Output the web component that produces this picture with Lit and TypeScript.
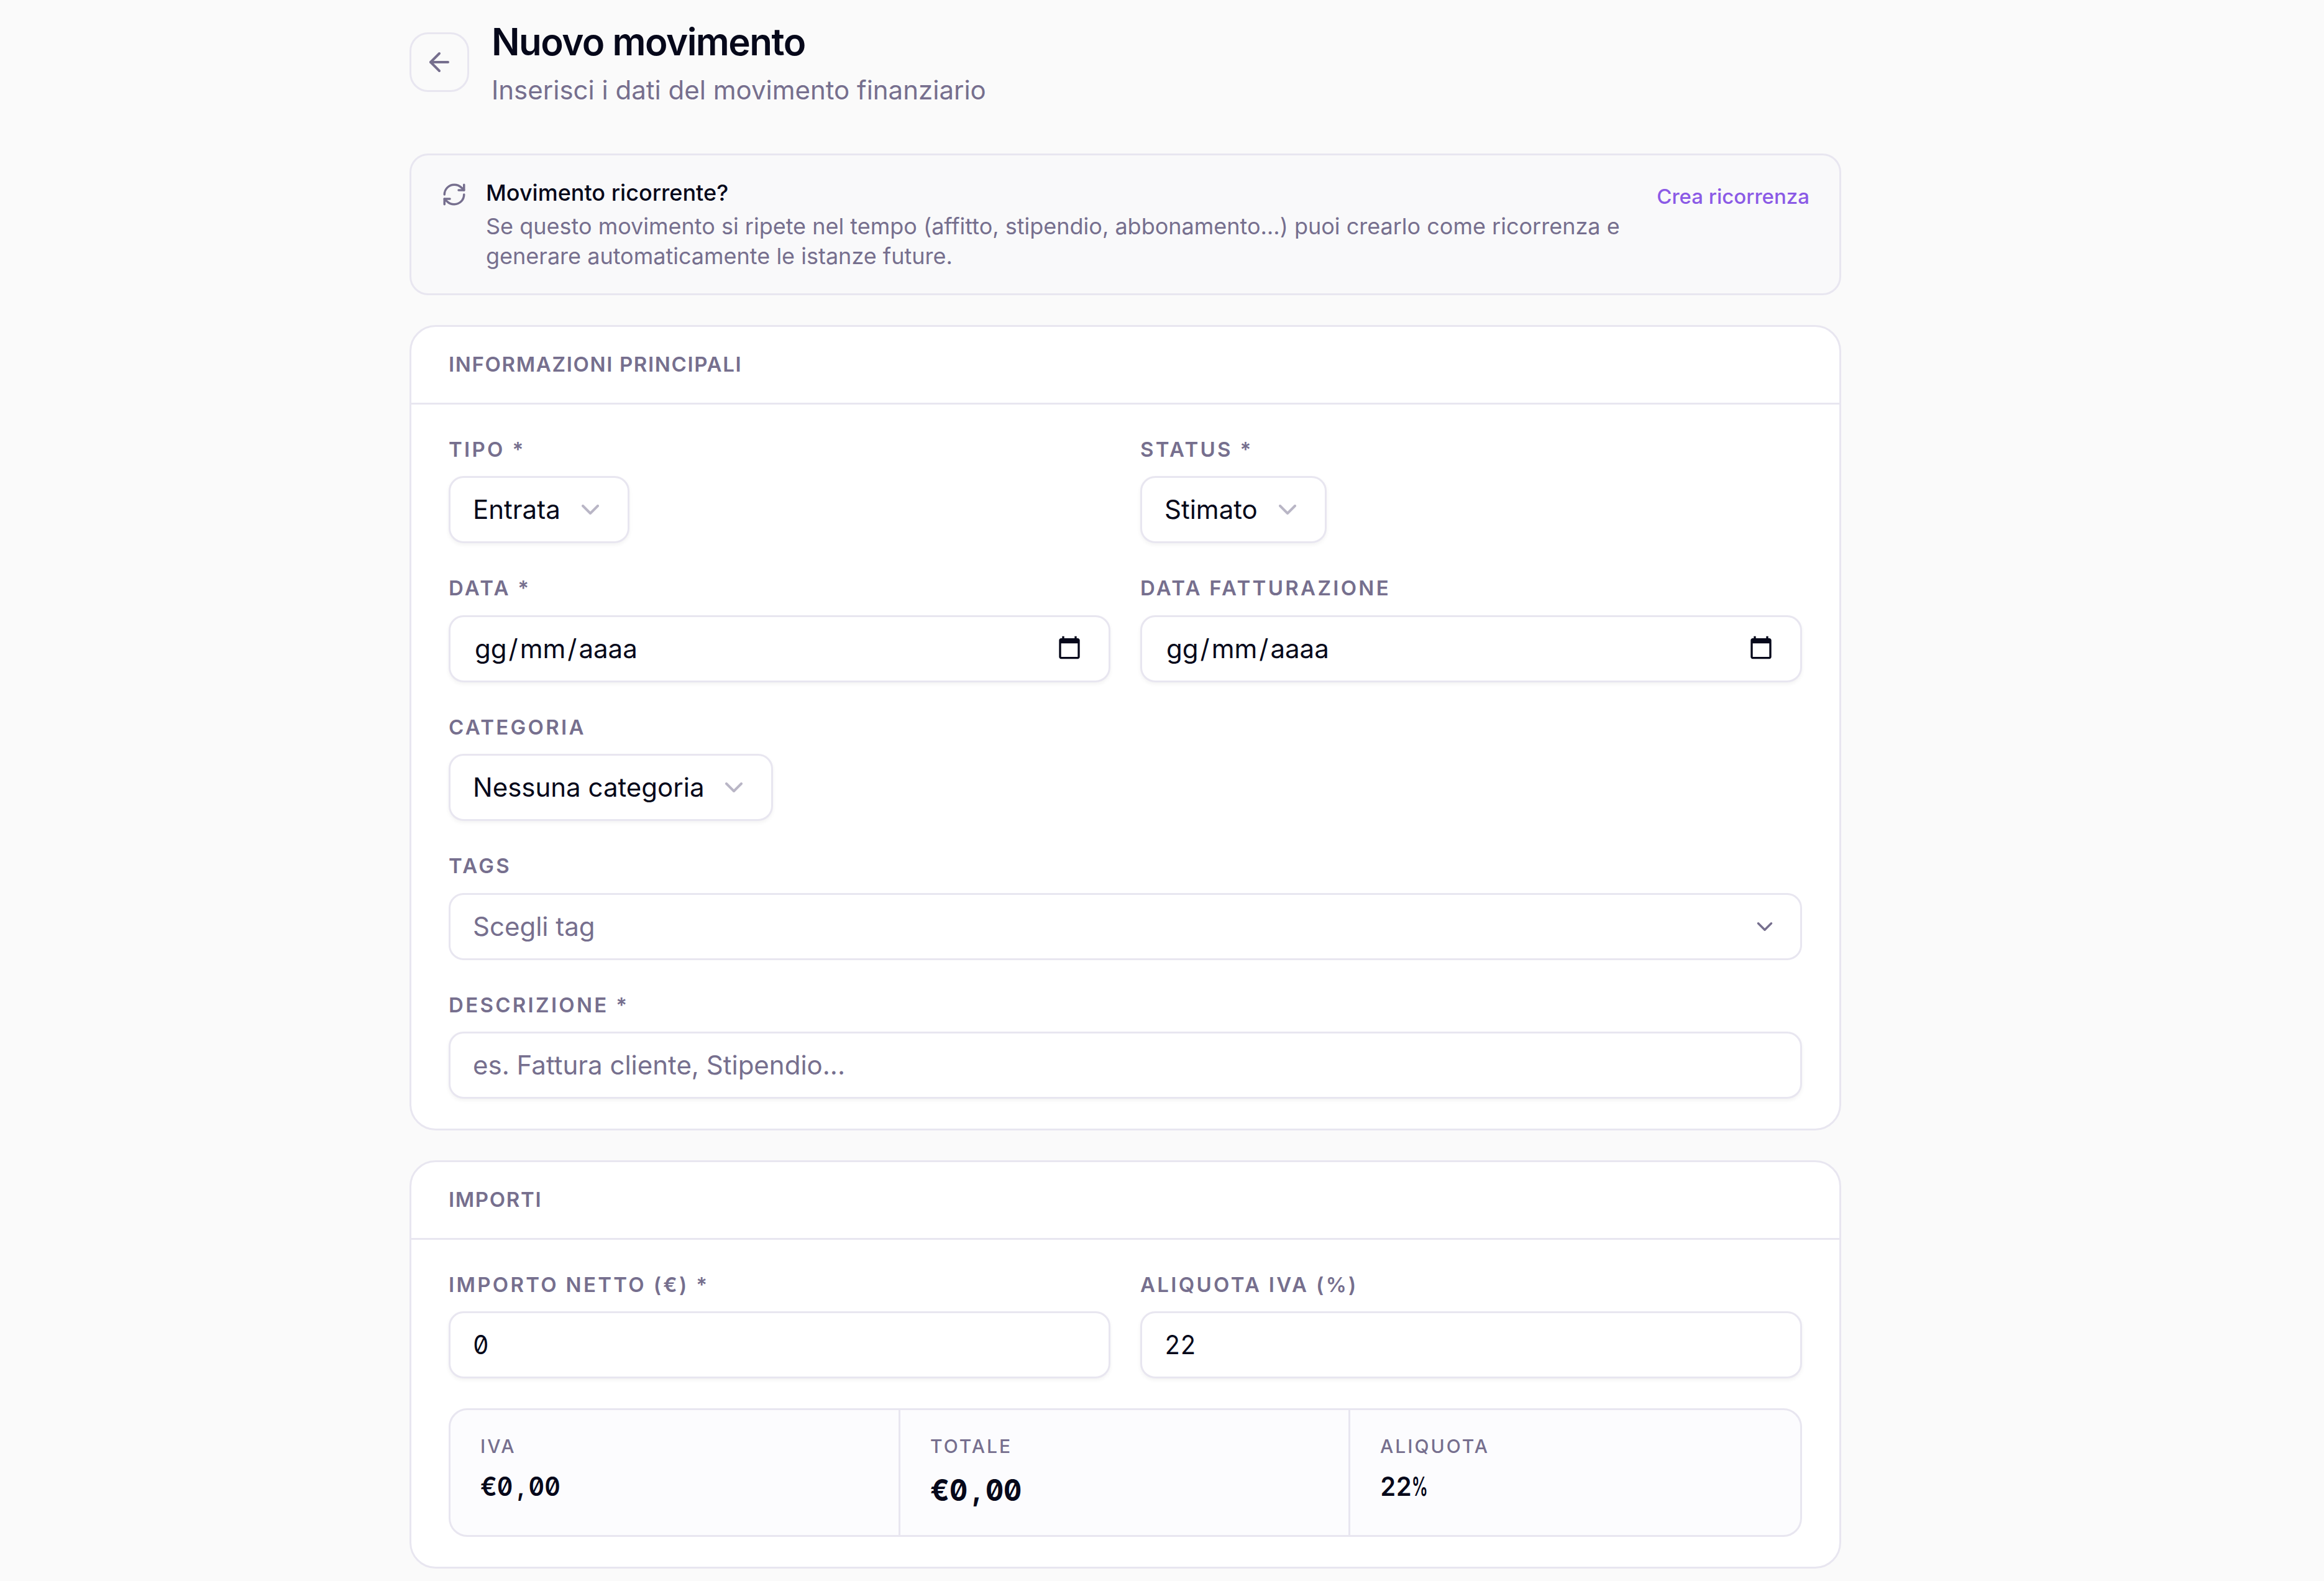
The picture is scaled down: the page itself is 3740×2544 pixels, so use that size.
import { LitElement, html, css, svg, nothing } from 'lit';
import { customElement, property } from 'lit/decorators.js';

const ICONS: Record<string, unknown> = {
  'arrow-left': svg`<path d="m12 19-7-7 7-7"/><path d="M19 12H5"/>`,
  'refresh': svg`<path d="M3 12a9 9 0 0 1 9-9 9.75 9.75 0 0 1 6.74 2.74L21 8"/><path d="M21 3v5h-5"/><path d="M21 12a9 9 0 0 1-9 9 9.75 9.75 0 0 1-6.74-2.74L3 16"/><path d="M8 16H3v5"/>`,
  'chevron': svg`<path d="m6 9 6 6 6-6"/>`,
};

@customElement('ui-icon')
export class UiIcon extends LitElement {
  @property() name = '';

  static styles = css`
    :host {
      display: block;
      flex: none;
      width: 48px;
      height: 48px;
    }

    svg {
      display: block;
      width: 100%;
      height: 100%;
      fill: none;
      stroke: currentColor;
      stroke-width: 2;
      stroke-linecap: round;
      stroke-linejoin: round;
    }
  `;

  render() {
    return html`<svg viewBox="0 0 24 24">${ICONS[this.name]}</svg>`;
  }
}

@customElement('form-card')
export class FormCard extends LitElement {
  @property() heading = '';

  static styles = css`
    :host {
      display: block;
      background: #fff;
      border: 3px solid #e8e6f0;
      border-radius: 42px;
      overflow: hidden;
    }

    h2 {
      margin: 0;
      padding: 36px 60px;
      border-bottom: 3px solid #e8e6f0;
      font-size: 33px;
      font-weight: 600;
      line-height: 49.5px;
      letter-spacing: 0.05em;
      text-transform: uppercase;
      color: #766f8e;
    }

    .body {
      display: grid;
      grid-template-columns: 1fr 1fr;
      gap: 48px;
      padding: 48px 60px;
    }
  `;

  render() {
    return html`
      <h2>${this.heading}</h2>
      <div class="body"><slot></slot></div>
    `;
  }
}

@customElement('form-field')
export class FormField extends LitElement {
  @property() label = '';
  @property() kind = 'text';
  @property() value = '';
  @property() placeholder = '';

  static styles = css`
    :host {
      display: flex;
      flex-direction: column;
      align-items: flex-start;
      gap: 18px;
      min-width: 0;
    }

    :host([wide]) {
      grid-column: 1 / -1;
    }

    .label {
      font-size: 33px;
      font-weight: 600;
      line-height: 49.5px;
      letter-spacing: 0.1em;
      text-transform: uppercase;
      color: #766f8e;
      white-space: nowrap;
    }

    .control {
      box-sizing: border-box;
      display: flex;
      align-items: center;
      justify-content: space-between;
      gap: 24px;
      width: 100%;
      height: 108px;
      padding: 0 36px;
      background: #fff;
      border: 3px solid #e8e6f0;
      border-radius: 24px;
      box-shadow: 0 3px 6px rgba(0, 0, 0, 0.05);
      font-size: 42px;
      line-height: 60px;
      white-space: nowrap;
    }

    .select {
      width: auto;
    }

    .select ui-icon {
      color: #766f8e;
      opacity: 0.5;
    }

    .picker {
      box-shadow: none;
      color: #766f8e;
    }

    .picker ui-icon {
      width: 42px;
      height: 42px;
    }

    .placeholder {
      color: #766f8e;
    }

    .number {
      font-feature-settings: 'tnum', 'zero';
      letter-spacing: -0.01em;
      transform: scaleX(0.94);
      transform-origin: left;
    }

    /* date segments keep a little air around the slashes */
    .date {
      display: flex;
    }

    .date span {
      padding: 0 3px;
    }

    .calendar {
      width: 40px;
      height: 40px;
      margin: 0 7px 3px 0;
      fill: currentColor;
    }
  `;

  private renderControl() {
    switch (this.kind) {
      case 'select':
        return html`<div class="control select">
          <span>${this.value}</span><ui-icon name="chevron"></ui-icon>
        </div>`;
      case 'picker':
        return html`<div class="control picker">
          <span>${this.placeholder}</span><ui-icon name="chevron"></ui-icon>
        </div>`;
      case 'date':
        return html`<div class="control">
          <div class="date"><span>gg</span>/<span>mm</span>/<span>aaaa</span></div>
          <svg class="calendar" viewBox="0 0 24 24">
            <path d="M20 3h-1V1h-2v2H7V1H5v2H4c-1.1 0-2 .9-2 2v16c0 1.1.9 2 2 2h16c1.1 0 2-.9 2-2V5c0-1.1-.9-2-2-2zm0 18H4V8h16v13z"/>
          </svg>
        </div>`;
      case 'number':
        return html`<div class="control"><span class="number">${this.value}</span></div>`;
      default:
        return html`<div class="control"><span class="placeholder">${this.placeholder}</span></div>`;
    }
  }

  render() {
    return html`<div class="label">${this.label}</div>${this.renderControl()}`;
  }
}

interface Total {
  label: string;
  value: string;
  decimals?: string;
  unit?: string;
  strong?: boolean;
}

@customElement('app-root')
export class AppRoot extends LitElement {
  private totals: Total[] = [
    { label: 'IVA', value: '€0', decimals: '00' },
    { label: 'Totale', value: '€0', decimals: '00', strong: true },
    { label: 'Aliquota', value: '22', unit: '%' },
  ];

  static styles = css`
    :host {
      display: block;
      box-sizing: border-box;
      height: 2544px;
      overflow: hidden;
      padding: 25px 0 0 659px;
      background: #fafafa;
      color: #06081a;
      font-family: Inter, 'Liberation Sans', sans-serif;
    }

    .page {
      display: flex;
      flex-direction: column;
      gap: 48px;
      width: 2304px;
    }

    header {
      display: flex;
      align-items: center;
      gap: 36px;
      margin-bottom: 24px;
    }

    .back {
      box-sizing: border-box;
      display: grid;
      place-items: center;
      width: 96px;
      height: 96px;
      border: 3px solid #e8e6f0;
      border-radius: 30px;
      color: #766f8e;
    }

    h1 {
      margin: 0 0 6px;
      font-size: 60px;
      font-weight: 600;
      line-height: 84px;
      letter-spacing: -0.025em;
    }

    .subtitle {
      font-size: 42px;
      line-height: 60px;
      color: #766f8e;
    }

    .notice {
      display: flex;
      align-items: flex-start;
      gap: 30px;
      padding: 36px 48px;
      background: #f9f9fa;
      border: 3px solid #e8e6f0;
      border-radius: 30px;
      font-size: 36px;
      line-height: 48px;
    }

    .notice ui-icon {
      width: 42px;
      height: 42px;
      margin-top: 6px;
      color: #766f8e;
    }

    .notice-text {
      flex: 1;
    }

    .notice-title {
      margin-bottom: 6px;
      font-weight: 500;
    }

    .notice-body {
      color: #766f8e;
    }

    .notice-link {
      margin-top: 6px;
      font-size: 33px;
      font-weight: 500;
      color: #8b5ae6;
      white-space: nowrap;
    }

    .totals {
      grid-column: 1 / -1;
      display: grid;
      grid-template-columns: repeat(3, 1fr);
      background: #fcfcfe;
      border: 3px solid #e8e6f0;
      border-radius: 30px;
    }

    .total {
      padding: 36px 48px;
      border-right: 3px solid #e8e6f0;
    }

    .total:last-child {
      border-right: 0;
    }

    .total-label {
      margin-bottom: 12px;
      font-size: 30px;
      font-weight: 500;
      line-height: 45px;
      letter-spacing: 0.1em;
      text-transform: uppercase;
      color: #766f8e;
    }

    .total-value {
      font-size: 42px;
      font-weight: 600;
      line-height: 60px;
      font-feature-settings: 'tnum', 'zero';
      transform: scaleX(0.94);
      transform-origin: left;
    }

    .total-value.strong {
      font-size: 48px;
      font-weight: 700;
      line-height: 72px;
    }

    /* the comma takes a full digit cell */
    .comma {
      display: inline-block;
      width: 0.64em;
      text-align: center;
    }

    .unit {
      display: inline-block;
      transform: scaleX(0.66);
      transform-origin: left;
    }
  `;

  private renderValue(t: Total) {
    return html`<div class="total-value ${t.strong ? 'strong' : ''}">${t.value}${t.decimals
      ? html`<span class="comma">,</span>${t.decimals}`
      : nothing}${t.unit ? html`<span class="unit">${t.unit}</span>` : nothing}</div>`;
  }

  render() {
    return html`
      <div class="page">
        <header>
          <div class="back"><ui-icon name="arrow-left"></ui-icon></div>
          <div>
            <h1>Nuovo movimento</h1>
            <div class="subtitle">Inserisci i dati del movimento finanziario</div>
          </div>
        </header>

        <section class="notice">
          <ui-icon name="refresh"></ui-icon>
          <div class="notice-text">
            <div class="notice-title">Movimento ricorrente?</div>
            <div class="notice-body">
              Se questo movimento si ripete nel tempo (affitto, stipendio, abbonamento…) puoi crearlo come ricorrenza e
              generare automaticamente le istanze future.
            </div>
          </div>
          <div class="notice-link">Crea ricorrenza</div>
        </section>

        <form-card heading="Informazioni principali">
          <form-field label="Tipo *" kind="select" value="Entrata"></form-field>
          <form-field label="Status *" kind="select" value="Stimato"></form-field>
          <form-field label="Data *" kind="date"></form-field>
          <form-field label="Data fatturazione" kind="date"></form-field>
          <form-field wide label="Categoria" kind="select" value="Nessuna categoria"></form-field>
          <form-field wide label="Tags" kind="picker" placeholder="Scegli tag"></form-field>
          <form-field wide label="Descrizione *" placeholder="es. Fattura cliente, Stipendio..."></form-field>
        </form-card>

        <form-card heading="Importi">
          <form-field label="Importo netto (€) *" kind="number" value="0"></form-field>
          <form-field label="Aliquota IVA (%)" kind="number" value="22"></form-field>
          <div class="totals">
            ${this.totals.map(
              (t) => html`
                <div class="total">
                  <div class="total-label">${t.label}</div>
                  ${this.renderValue(t)}
                </div>
              `
            )}
          </div>
        </form-card>
      </div>
    `;
  }
}
